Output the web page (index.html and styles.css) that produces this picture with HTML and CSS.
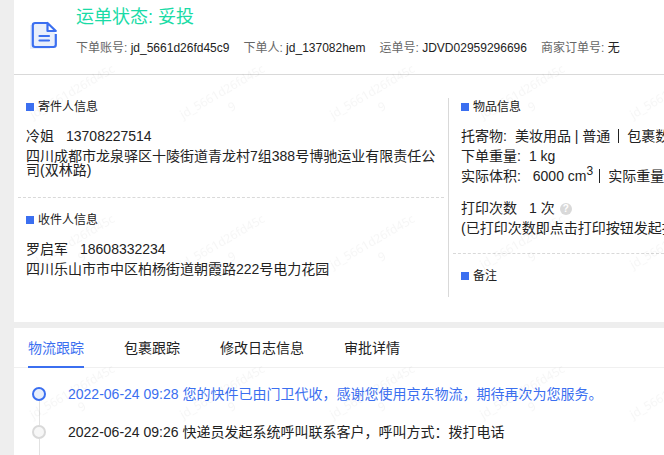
FILE: index.html
```html
<!DOCTYPE html>
<html lang="zh-CN">
<head>
<meta charset="utf-8">
<meta name="viewport" content="width=device-width, initial-scale=1">
<title>运单状态</title>
<link rel="stylesheet" href="styles.css">
</head>
<body>
<main class="page">
  <section class="card">
    <header class="summary">
      <svg class="doc-icon" viewBox="0 0 28 28" aria-hidden="true">
        <path d="M0 4h20v24H0z" fill="#e9effb"/>
        <path d="M17.500 2H5a2.200 2.200 0 0 0-2.200 2.200v19.600A2.200 2.200 0 0 0 5 26h18.600a2.200 2.200 0 0 0 2.200-2.200V13" fill="#e9effb" stroke="#3b6ff0" stroke-width="2.200"/>
        <path d="M17.500 2v8h8.300z" fill="#fff" stroke="#3b6ff0" stroke-width="2.200" stroke-linejoin="round"/>
        <path d="M9.500 15h9.500M9.500 19.500h9.500" stroke="#3b6ff0" stroke-width="2.200" stroke-linecap="round"/>
      </svg>
      <div class="summary-text">
        <h1 class="status">运单状态: 妥投</h1>
        <div class="meta">
          <span><span class="label">下单账号:</span> jd_5661d26fd45c9</span>
          <span><span class="label">下单人:</span> jd_137082hem</span>
          <span><span class="label">运单号:</span> JDVD02959296696</span>
          <span><span class="label">商家订单号:</span> 无</span>
        </div>
      </div>
    </header>
    <div class="details">
      <div class="people">
        <section class="block">
          <h2 class="block-title">寄件人信息</h2>
          <p class="line"><span class="name">冷姐</span>13708227514</p>
          <p class="address">四川成都市龙泉驿区十陵街道青龙村7组388号博驰运业有限责任公司(双林路)</p>
        </section>
        <section class="block">
          <h2 class="block-title">收件人信息</h2>
          <p class="line"><span class="name">罗启军</span>18608332234</p>
          <p class="address">四川乐山市市中区柏杨街道朝霞路222号电力花园</p>
        </section>
      </div>
      <div class="goods">
        <section class="block">
          <h2 class="block-title">物品信息</h2>
          <p class="line"><span class="key">托寄物:</span>美妆用品 | 普通<span class="bar"></span>包裹数</p>
          <p class="line"><span class="key">下单重量:</span>1 kg</p>
          <p class="line"><span class="key">实际体积:</span> 6000 cm<sup>3</sup><span class="bar"></span>实际重量</p>
          <div class="prints">
            <p class="line"><span class="name">打印次数</span>1 次<button class="help" type="button" aria-label="帮助">?</button></p>
            <p class="line">(已打印次数即点击打印按钮发起打</p>
          </div>
        </section>
        <section class="block">
          <h2 class="block-title">备注</h2>
        </section>
      </div>
    </div>
  </section>
  <section class="card tracking">
    <nav class="tabs">
      <button class="tab active" type="button">物流跟踪</button>
      <button class="tab" type="button">包裹跟踪</button>
      <button class="tab" type="button">修改日志信息</button>
      <button class="tab" type="button">审批详情</button>
    </nav>
    <ol class="timeline">
      <li class="event current">2022-06-24 09:28 您的快件已由门卫代收，感谢您使用京东物流，期待再次为您服务。</li>
      <li class="event">2022-06-24 09:26 快递员发起系统呼叫联系客户，呼叫方式：拨打电话</li>
    </ol>
  </section>
</main>
<svg class="watermark" aria-hidden="true">
  <defs>
    <pattern id="mark" x="14" y="50" width="150" height="150" patternUnits="userSpaceOnUse">
      <g transform="translate(19 69) rotate(-30)">
        <text x="0" y="0">jd_5661d26fd45c</text>
        <text x="45" y="18">9</text>
      </g>
    </pattern>
  </defs>
  <rect width="100%" height="100%" fill="url(#mark)"/>
</svg>
</body>
</html>
```
FILE: styles.css
```css
*, *::before, *::after {
  box-sizing: border-box;
}

body {
  margin: 0;
  overflow: hidden;
  background: #eee;
  color: #222;
  font: 14px/20px "Liberation Sans", "Noto Sans CJK SC", sans-serif;
}

h1, h2, p, ol {
  margin: 0;
  padding: 0;
  font-weight: normal;
}

button {
  padding: 0;
  border: 0;
  background: none;
  color: inherit;
  font: inherit;
}

.page {
  display: flex;
  flex-direction: column;
  gap: 6px;
  min-height: 100vh;
  padding-left: 14px;
}

.card {
  background: #fff;
}

.summary {
  display: flex;
  gap: 18px;
  padding: 4px 16px 16px;
  border-bottom: 1px solid #d9d9d9;
}

.doc-icon {
  flex: none;
  width: 28px;
  height: 28px;
  margin-top: 17px;
}

.status {
  color: #19dba6;
  font-size: 18px;
  line-height: 26px;
}

.meta {
  display: flex;
  gap: 14px;
  margin-top: 8px;
  font-size: 12px;
  line-height: 20px;
  white-space: nowrap;
}

.label {
  color: #666;
}

.details {
  display: grid;
  grid-template-columns: minmax(0, 87fr) minmax(0, 43fr);
  padding: 23px 0 25px;
}

.people {
  padding-right: 4px;
  border-right: 1px solid #d9d9d9;
}

.goods {
  overflow: hidden;
  white-space: nowrap;
}

.block {
  margin-left: 4px;
  padding: 1px 8px 0;
}

.block + .block {
  margin-top: 20px;
  padding-top: 14px;
  border-top: 1px dashed #d9d9d9;
}

.goods .block + .block {
  margin-top: 15px;
  padding-bottom: 2px;
}

.block-title {
  display: flex;
  align-items: center;
  gap: 4px;
  margin-bottom: 11px;
  font-size: 12px;
  line-height: 16px;
}

.block-title::before {
  content: "";
  width: 8px;
  height: 8px;
  background: #3b6ff0;
}

.name {
  margin-right: 12px;
}

.key {
  margin-right: 8px;
}

.address {
  margin-top: 3px;
  line-height: 14px;
}

sup {
  font-size: 12px;
  line-height: 0;
}

.bar {
  display: inline-block;
  width: 1px;
  height: 14px;
  margin: 0 8px;
  background: #222;
  vertical-align: -2px;
}

sup + .bar {
  margin-left: 6px;
}

.prints {
  margin-top: 12px;
}

.help {
  width: 12px;
  height: 12px;
  margin-left: 5px;
  border-radius: 50%;
  background: #d9d9d9;
  color: #fff;
  font-size: 10px;
  font-weight: bold;
  line-height: 12px;
  vertical-align: 1px;
}

.tracking {
  display: flex;
  flex: 1;
  flex-direction: column;
}

.tabs {
  display: flex;
  gap: 40px;
  padding-left: 14px;
  box-shadow: inset 0 -1px #f0f0f0;
}

.tab {
  padding: 10px 0 8px;
  border-bottom: 2px solid transparent;
}

.tab.active {
  border-color: #3b6ff0;
  color: #3b6ff0;
}

.timeline {
  display: flex;
  flex: 1;
  flex-direction: column;
  padding: 7px 18px 0;
  list-style: none;
}

.event {
  position: relative;
  padding: 9px 0 9px 36px;
}

.event:last-child {
  flex: 1;
}

.event::before {
  content: "";
  position: absolute;
  top: 12px;
  left: 0;
  width: 14px;
  height: 14px;
  border: 2px solid #d9d9d9;
  border-radius: 50%;
  background: #f7f7f7;
}

.event::after {
  content: "";
  position: absolute;
  top: 26px;
  bottom: -12px;
  left: 7px;
  width: 1px;
  background: #e2e2e2;
}

.event:last-child::after {
  bottom: 0;
}

.event.current {
  color: #3b6ff0;
}

.event.current::before {
  border-color: #3b6ff0;
  background: #e9effb;
}

.watermark {
  position: fixed;
  inset: 0;
  width: 100%;
  height: 100%;
  pointer-events: none;
  fill: rgba(0, 0, 0, 0.035);
  font: 12px "Noto Sans", sans-serif;
}
```
